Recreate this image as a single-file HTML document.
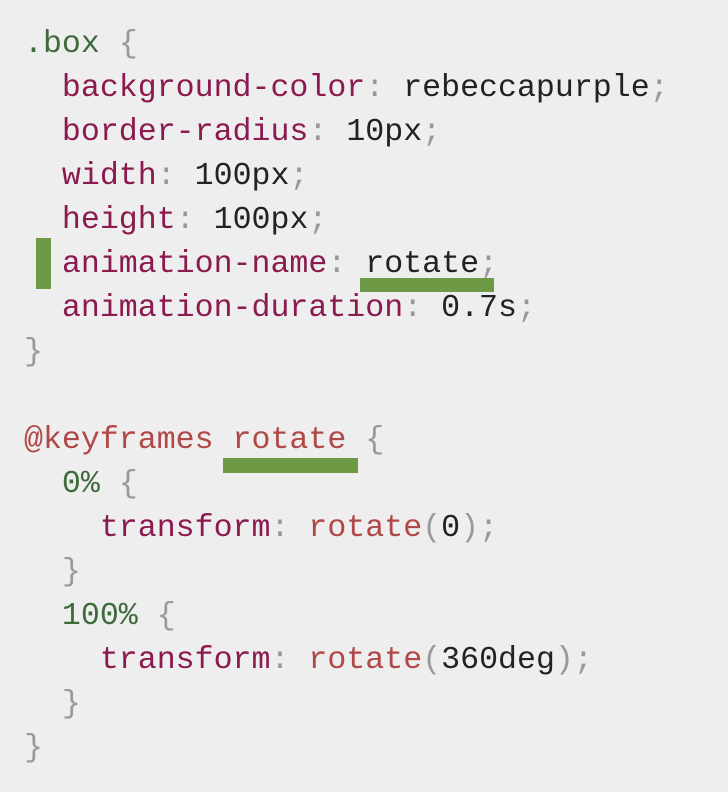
<!DOCTYPE html>
<html><head><style>
html,body{margin:0;padding:0;background:#eeeeee;width:728px;height:792px;overflow:hidden}
pre{position:absolute;left:24px;top:23px;margin:0;font-family:"Liberation Mono",monospace;font-size:31.6px;line-height:44px;color:#222}
.s{color:#3d6b3a}.p{color:#8b1a50}.g{color:#999}.k{color:#b04848}
.bar{position:absolute;background:#6f9a45}
</style></head><body>
<div class="bar" style="left:36px;top:238px;width:15px;height:51px"></div>
<div class="bar" style="left:360px;top:278px;width:134px;height:14px"></div>
<div class="bar" style="left:223px;top:458px;width:135px;height:15px"></div>
<pre><span class="s">.box</span> <span class="g">{</span>
  <span class="p">background-color</span><span class="g">:</span> rebeccapurple<span class="g">;</span>
  <span class="p">border-radius</span><span class="g">:</span> 10px<span class="g">;</span>
  <span class="p">width</span><span class="g">:</span> 100px<span class="g">;</span>
  <span class="p">height</span><span class="g">:</span> 100px<span class="g">;</span>
  <span class="p">animation-name</span><span class="g">:</span> rotate<span class="g">;</span>
  <span class="p">animation-duration</span><span class="g">:</span> 0.7s<span class="g">;</span>
<span class="g">}</span>

<span class="k">@keyframes rotate</span> <span class="g">{</span>
  <span class="s">0%</span> <span class="g">{</span>
    <span class="p">transform</span><span class="g">:</span> <span class="k">rotate</span><span class="g">(</span>0<span class="g">);</span>
  <span class="g">}</span>
  <span class="s">100%</span> <span class="g">{</span>
    <span class="p">transform</span><span class="g">:</span> <span class="k">rotate</span><span class="g">(</span>360deg<span class="g">);</span>
  <span class="g">}</span>
<span class="g">}</span></pre>
</body></html>
